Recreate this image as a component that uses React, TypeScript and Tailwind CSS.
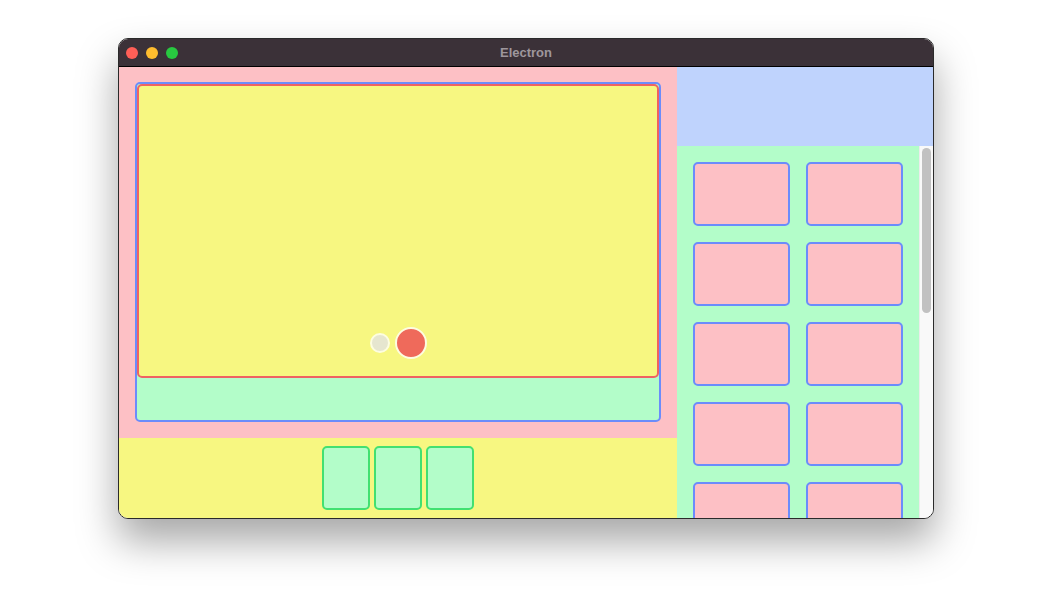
import React from 'react';

const tiles = Array.from({ length: 10 }, (_, i) => i);

const TitleBar: React.FC = () => (
  <div className="relative flex h-[28px] items-center border-b border-black bg-[#3b3138] px-[7px]">
    <div className="flex items-center gap-[8px]">
      <span className="h-[12px] w-[12px] rounded-full bg-[#fe5f57]" />
      <span className="h-[12px] w-[12px] rounded-full bg-[#febc2e]" />
      <span className="h-[12px] w-[12px] rounded-full bg-[#28c840]" />
    </div>
    <div className="absolute inset-0 flex items-center justify-center text-[13px] font-bold text-[#9e969c]">
      Electron
    </div>
  </div>
);

const Stage: React.FC = () => (
  <div className="flex flex-1 flex-col bg-[#fdc0c5] px-4 pt-[15px] pb-4">
    <div className="flex flex-1 flex-col rounded-[5px] border-2 border-[#6b8cfb] bg-[#b3fdc9]">
      <div className="relative h-[294px] rounded-[5px] border-2 border-[#f06262] bg-[#f7f781]">
        <div className="absolute bottom-[17px] left-0 right-0 flex items-center justify-center gap-[5px]">
          <span className="h-[20px] w-[20px] rounded-full border-2 border-[#fdfde0] bg-[#e6e6cf]" />
          <span className="h-[32px] w-[32px] rounded-full border-2 border-[#fdfde0] bg-[#ef6a5b]" />
        </div>
      </div>
    </div>
  </div>
);

const Tray: React.FC = () => (
  <div className="flex h-[80px] items-center justify-center gap-[4px] bg-[#f7f781]">
    {[0, 1, 2].map((i) => (
      <div
        key={i}
        className="h-[64px] w-[48px] rounded-[5px] border-2 border-[#42e071] bg-[#b3fdc9]"
      />
    ))}
  </div>
);

const Sidebar: React.FC = () => (
  <div className="flex w-[256px] flex-col">
    <div className="h-[79px] bg-[#bfd3fd]" />
    <div className="flex min-h-0 flex-1">
      <div className="min-h-0 flex-1 overflow-hidden bg-[#b3fdc9] p-4">
        <div className="grid grid-cols-2 gap-4">
          {tiles.map((t) => (
            <div
              key={t}
              className="h-[64px] rounded-[5px] border-2 border-[#6b8cfb] bg-[#fdc0c5]"
            />
          ))}
        </div>
      </div>
      <div className="w-[14px] border-l border-[#ececec] bg-[#f9f9f9] px-[2px] pt-[2px]">
        <div className="h-[165px] rounded-full bg-[#c1c1c1]" />
      </div>
    </div>
  </div>
);

export default function App() {
  return (
    <div
      className="flex h-[592px] w-[1052px] justify-center bg-white pt-[38px]"
      style={{ fontFamily: '"Liberation Sans", Arial, sans-serif' }}
    >
      <div className="flex h-[481px] w-[816px] flex-col overflow-hidden rounded-[10px] border border-[#2a2a2a] bg-white shadow-[0_22px_40px_rgba(0,0,0,0.35)]">
        <TitleBar />
        <div className="flex min-h-0 flex-1">
          <div className="flex flex-1 flex-col">
            <Stage />
            <Tray />
          </div>
          <Sidebar />
        </div>
      </div>
    </div>
  );
}
